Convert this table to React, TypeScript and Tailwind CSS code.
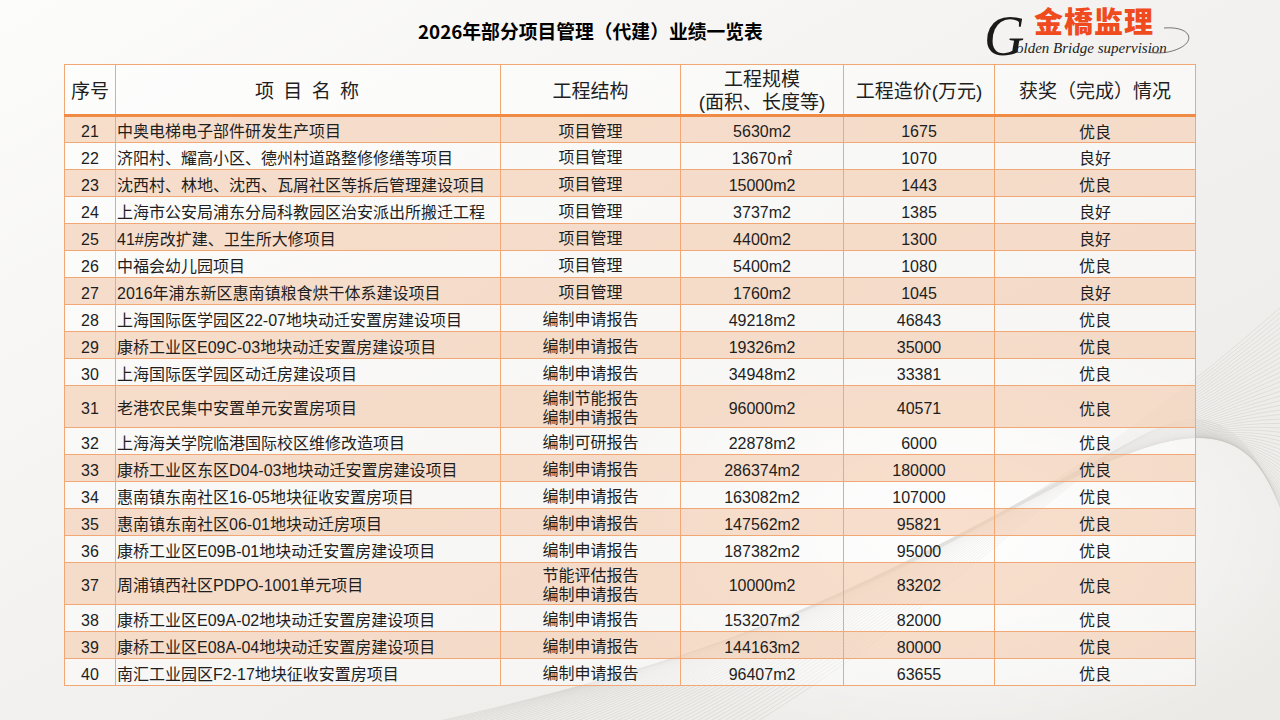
import React from 'react';

type Row = {
  no: number;
  name: string;
  kind: string[];
  scale: string;
  cost: string;
  result: string;
};

const ROWS: Row[] = [
  { no: 21, name: '中奥电梯电子部件研发生产项目', kind: ['项目管理'], scale: '5630m2', cost: '1675', result: '优良' },
  { no: 22, name: '济阳村、耀高小区、德州村道路整修修缮等项目', kind: ['项目管理'], scale: '13670㎡', cost: '1070', result: '良好' },
  { no: 23, name: '沈西村、林地、沈西、瓦屑社区等拆后管理建设项目', kind: ['项目管理'], scale: '15000m2', cost: '1443', result: '优良' },
  { no: 24, name: '上海市公安局浦东分局科教园区治安派出所搬迁工程', kind: ['项目管理'], scale: '3737m2', cost: '1385', result: '良好' },
  { no: 25, name: '41#房改扩建、卫生所大修项目', kind: ['项目管理'], scale: '4400m2', cost: '1300', result: '良好' },
  { no: 26, name: '中福会幼儿园项目', kind: ['项目管理'], scale: '5400m2', cost: '1080', result: '优良' },
  { no: 27, name: '2016年浦东新区惠南镇粮食烘干体系建设项目', kind: ['项目管理'], scale: '1760m2', cost: '1045', result: '良好' },
  { no: 28, name: '上海国际医学园区22-07地块动迁安置房建设项目', kind: ['编制申请报告'], scale: '49218m2', cost: '46843', result: '优良' },
  { no: 29, name: '康桥工业区E09C-03地块动迁安置房建设项目', kind: ['编制申请报告'], scale: '19326m2', cost: '35000', result: '优良' },
  { no: 30, name: '上海国际医学园区动迁房建设项目', kind: ['编制申请报告'], scale: '34948m2', cost: '33381', result: '优良' },
  { no: 31, name: '老港农民集中安置单元安置房项目', kind: ['编制节能报告', '编制申请报告'], scale: '96000m2', cost: '40571', result: '优良' },
  { no: 32, name: '上海海关学院临港国际校区维修改造项目', kind: ['编制可研报告'], scale: '22878m2', cost: '6000', result: '优良' },
  { no: 33, name: '康桥工业区东区D04-03地块动迁安置房建设项目', kind: ['编制申请报告'], scale: '286374m2', cost: '180000', result: '优良' },
  { no: 34, name: '惠南镇东南社区16-05地块征收安置房项目', kind: ['编制申请报告'], scale: '163082m2', cost: '107000', result: '优良' },
  { no: 35, name: '惠南镇东南社区06-01地块动迁房项目', kind: ['编制申请报告'], scale: '147562m2', cost: '95821', result: '优良' },
  { no: 36, name: '康桥工业区E09B-01地块动迁安置房建设项目', kind: ['编制申请报告'], scale: '187382m2', cost: '95000', result: '优良' },
  { no: 37, name: '周浦镇西社区PDPO-1001单元项目', kind: ['节能评估报告', '编制申请报告'], scale: '10000m2', cost: '83202', result: '优良' },
  { no: 38, name: '康桥工业区E09A-02地块动迁安置房建设项目', kind: ['编制申请报告'], scale: '153207m2', cost: '82000', result: '优良' },
  { no: 39, name: '康桥工业区E08A-04地块动迁安置房建设项目', kind: ['编制申请报告'], scale: '144163m2', cost: '80000', result: '优良' },
  { no: 40, name: '南汇工业园区F2-17地块征收安置房项目', kind: ['编制申请报告'], scale: '96407m2', cost: '63655', result: '优良' },
];

const FONT = { fontFamily: '"Liberation Sans", "Noto Sans CJK SC", sans-serif' };

export default function App() {
  return (
    <div
      className="relative w-[1280px] h-[720px] overflow-hidden bg-gradient-to-br from-[#fcfcfb] via-[#f2f1ef] to-[#ebeae7] text-[#1e1e1e]"
      style={FONT}
    >
      <Waves />

      {/* ── Title + logo ─────────────────────────────────────────────── */}
      <div className="relative h-[64px]">
        <h1
          className="absolute left-[418px] top-[22px] text-[18.8px] font-bold leading-none text-black"
          style={{ fontFamily: '"Noto Sans CJK SC", sans-serif' }}
        >
          2026年部分项目管理（代建）业绩一览表
        </h1>
        <Logo />
      </div>

      {/* ── Table ────────────────────────────────────────────────────── */}
      <table className="relative ml-[64px] w-[1131px] border-collapse table-fixed">
        <colgroup>
          <col className="w-[51px]" />
          <col className="w-[385px]" />
          <col className="w-[180px]" />
          <col className="w-[163px]" />
          <col className="w-[151px]" />
          <col className="w-[201px]" />
        </colgroup>
        <thead>
          <tr className="h-[51px] bg-white/50 text-[19px] leading-[23px] border-b-[3px] border-[#ef8b45]">
            <th className="border border-[#f1a874] font-normal pt-[3px]">序号</th>
            <th className="border border-[#f1a874] font-normal pt-[3px] tracking-[2px]">项 目 名 称</th>
            <th className="border border-[#f1a874] font-normal pt-[3px]">工程结构</th>
            <th className="border border-[#f1a874] font-normal pt-[2px]">
              <div>工程规模</div>
              <div>(面积、长度等)</div>
            </th>
            <th className="border border-[#f1a874] font-normal pt-[3px]">工程造价(万元)</th>
            <th className="border border-[#f1a874] font-normal pt-[3px]">获奖（完成）情况</th>
          </tr>
        </thead>
        <tbody className="text-[16px] leading-[19px]">
          {ROWS.map((r, i) => (
            <tr
              key={r.no}
              className={
                (r.kind.length > 1 ? 'h-[41px] ' : 'h-[27px] ') +
                (i % 2 === 0 ? 'bg-[#f6d4bc]/75' : 'bg-white/45')
              }
            >
              <td className="border border-[#f1a874] text-center pt-[4px]">{r.no}</td>
              <td className="border border-[#f1a874] pl-[1px] pt-[4px] whitespace-nowrap">{r.name}</td>
              <td className="border border-[#f1a874] text-center pt-[3px]">
                {r.kind.map((k) => (
                  <div key={k}>{k}</div>
                ))}
              </td>
              <td className="border border-[#f1a874] text-center pt-[4px]">{r.scale}</td>
              <td className="border border-[#f1a874] text-center pt-[4px]">{r.cost}</td>
              <td className="border border-[#f1a874] text-center pt-[5px]">{r.result}</td>
            </tr>
          ))}
        </tbody>
      </table>
    </div>
  );
}

// ── Logo ─────────────────────────────────────────────────────────────────

function Logo() {
  return (
    <div className="absolute left-[982px] top-[4px] w-[220px] h-[56px]">
      <span
        className="absolute left-[2px] top-[4px] text-[56px] italic leading-none text-[#1a1a1a]"
        style={{ fontFamily: '"Liberation Serif", serif' }}
      >
        G
      </span>
      <span
        className="absolute left-[52px] top-[2px] text-[29px] font-black leading-none tracking-[1px] text-[#ef4b1e]"
        style={{ fontFamily: '"Noto Sans CJK SC", sans-serif' }}
      >
        金橋监理
      </span>
      <span
        className="absolute left-[34px] top-[37px] text-[15px] italic leading-none text-[#222]"
        style={{ fontFamily: '"Liberation Serif", serif' }}
      >
        olden Bridge supervision
      </span>
      <svg className="absolute left-0 top-0" width="220" height="56" viewBox="0 0 220 56" fill="none">
        <path d="M182 24 C 208 22, 214 36, 198 44 C 188 49, 176 50, 166 48" stroke="#555" strokeWidth="0.8" />
      </svg>
    </div>
  );
}

// ── Background swirl lines ───────────────────────────────────────────────

function Waves() {
  const lines = Array.from({ length: 50 }, (_, i) => i);
  return (
    <svg
      className="absolute left-0 top-0 pointer-events-none"
      width="1280"
      height="720"
      viewBox="0 0 1280 720"
      fill="none"
    >
      <defs>
        <radialGradient id="glow" cx="0.74" cy="0.74" r="0.3">
          <stop offset="0" stopColor="#ffffff" stopOpacity="0.95" />
          <stop offset="1" stopColor="#ffffff" stopOpacity="0" />
        </radialGradient>
      </defs>
      <rect width="1280" height="720" fill="url(#glow)" />
      {lines.map((i) => {
        const d = i * 7;
        return (
          <path
            key={i}
            d={`M ${400 + d} 730 C ${760 + d} ${650 - d * 0.4}, ${1000 + d * 0.6} ${560 - d * 0.9}, 1300 ${290 + d * 0.8}`}
            stroke="#c9c7c3"
            strokeOpacity={0.6}
            strokeWidth="0.7"
          />
        );
      })}
    </svg>
  );
}
